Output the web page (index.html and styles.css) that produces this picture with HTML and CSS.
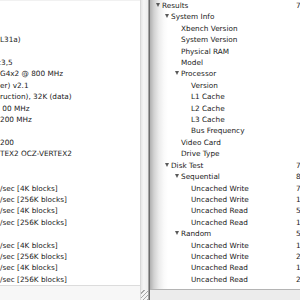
FILE: index.html
```html
<!DOCTYPE html>
<html lang="en">
<head>
    <meta charset="UTF-8">
    <title>Xbench Results</title>
    <link rel="stylesheet" href="styles.css">
</head>
<body>
    <div class="window">
        <div class="report">
            <div class="lines">
                <div class="line"></div>
                <div class="line"></div>
                <div class="line"></div>
                <div class="line">L31a)</div>
                <div class="line"></div>
                <div class="line cut">c3,5</div>
                <div class="line">G4x2 @ 800 MHz</div>
                <div class="line">er) v2.1</div>
                <div class="line">ruction), 32K (data)</div>
                <div class="line">&nbsp;00 MHz</div>
                <div class="line">200 MHz</div>
                <div class="line"></div>
                <div class="line">200</div>
                <div class="line">TEX2 OCZ-VERTEX2</div>
                <div class="line"></div>
                <div class="line"></div>
                <div class="line">/sec [4K blocks]</div>
                <div class="line">/sec [256K blocks]</div>
                <div class="line">/sec [4K blocks]</div>
                <div class="line">/sec [256K blocks]</div>
                <div class="line"></div>
                <div class="line">/sec [4K blocks]</div>
                <div class="line">/sec [256K blocks]</div>
                <div class="line">/sec [4K blocks]</div>
                <div class="line">/sec [256K blocks]</div>
            </div>
            <div class="report-foot"></div>
        </div>
        <div class="gutter"><span class="grip"></span></div>
        <div class="divider"></div>
        <div class="outline">
            <div class="rows">
                <div class="row"><span class="label l0 open">Results</span><span class="val">73.41</span></div>
                <div class="row"><span class="label l1 open">System Info</span><span class="val"></span></div>
                <div class="row"><span class="label l2">Xbench Version</span><span class="val"></span></div>
                <div class="row"><span class="label l2">System Version</span><span class="val"></span></div>
                <div class="row"><span class="label l2">Physical RAM</span><span class="val"></span></div>
                <div class="row"><span class="label l2">Model</span><span class="val"></span></div>
                <div class="row"><span class="label l2 open">Processor</span><span class="val"></span></div>
                <div class="row"><span class="label l3">Version</span><span class="val"></span></div>
                <div class="row"><span class="label l3">L1 Cache</span><span class="val"></span></div>
                <div class="row"><span class="label l3">L2 Cache</span><span class="val"></span></div>
                <div class="row"><span class="label l3">L3 Cache</span><span class="val"></span></div>
                <div class="row"><span class="label l3">Bus Frequency</span><span class="val"></span></div>
                <div class="row"><span class="label l2">Video Card</span><span class="val"></span></div>
                <div class="row"><span class="label l2">Drive Type</span><span class="val"></span></div>
                <div class="row"><span class="label l1 open">Disk Test</span><span class="val">73.41</span></div>
                <div class="row"><span class="label l2 open">Sequential</span><span class="val">84.12</span></div>
                <div class="row"><span class="label l3">Uncached Write</span><span class="val">72.87</span></div>
                <div class="row"><span class="label l3">Uncached Write</span><span class="val">113.40</span></div>
                <div class="row"><span class="label l3">Uncached Read</span><span class="val">55.32</span></div>
                <div class="row"><span class="label l3">Uncached Read</span><span class="val">160.22</span></div>
                <div class="row"><span class="label l2 open">Random</span><span class="val">53.65</span></div>
                <div class="row"><span class="label l3">Uncached Write</span><span class="val">18.94</span></div>
                <div class="row"><span class="label l3">Uncached Write</span><span class="val">29.70</span></div>
                <div class="row"><span class="label l3">Uncached Read</span><span class="val">15.81</span></div>
                <div class="row"><span class="label l3">Uncached Read</span><span class="val">217.06</span></div>
            </div>
            <div class="outline-foot"></div>
        </div>
    </div>
</body>
</html>
```

FILE: styles.css
```css
body {
    margin: 0;
    font-family: "DejaVu Sans", Verdana, sans-serif;
    font-size: 7.3px;
    color: #1a1a1a;
    background: #ffffff;
}

.window {
    display: flex;
    width: 300px;
    height: 300px;
    overflow: hidden;
}

/* left text panel, scrolled so only the tail of each line shows */
.report {
    width: 140px;
    display: flex;
    flex-direction: column;
    background: #ffffff;
    border-top: 1px solid #f1f1f1;
    box-sizing: border-box;
    overflow: hidden;
}

.lines {
    display: grid;
    grid-auto-rows: 11.42px;
    flex: 1;
    margin-top: -1px;
}

.line {
    line-height: 11.42px;
    white-space: nowrap;
}

.cut {
    margin-left: -3px;
}

.report-foot {
    height: 14px;
    border-top: 1px solid #dcdcdc;
    background: #f7f7f7;
}

.gutter {
    width: 8px;
    background: linear-gradient(to right, #e6e6e6, #f6f6f6 40%, #ececec);
    border-left: 1px solid #d8d8d8;
    box-sizing: border-box;
    display: flex;
    flex-direction: column;
    justify-content: flex-end;
}

.grip {
    height: 10px;
    background: repeating-linear-gradient(135deg, #f4f4f4 0 2px, #a8a8a8 2px 3px);
}

.divider {
    width: 2px;
    background: #6c6c6c;
    border-left: 1px solid #a4a4a4;
    box-sizing: border-box;
}

/* outline view */
.outline {
    flex: 1;
    display: flex;
    flex-direction: column;
    background: linear-gradient(to right, #b0b0b0, #d2d2d2 4px, #ececec 9px, #fafafa 14px, #ffffff 18px);
    overflow: hidden;
}

.rows {
    display: grid;
    grid-auto-rows: 11.42px;
    flex: 1;
}

.row {
    display: grid;
    grid-template-columns: 146px auto;
    line-height: 11.42px;
    white-space: nowrap;
}

.label.l0 { padding-left: 12px; }
.label.l1 { padding-left: 21px; }
.label.l2 { padding-left: 31px; }
.label.l3 { padding-left: 41px; }

.open::before {
    content: "";
    display: inline-block;
    margin-left: -6px;
    margin-right: 2px;
    vertical-align: 1px;
    border-top: 4px solid #5a5a5a;
    border-left: 2px solid transparent;
    border-right: 2px solid transparent;
}

.outline-foot {
    height: 10px;
    border-top: 1px solid #b4b4b4;
    background: #ececec;
}
```
